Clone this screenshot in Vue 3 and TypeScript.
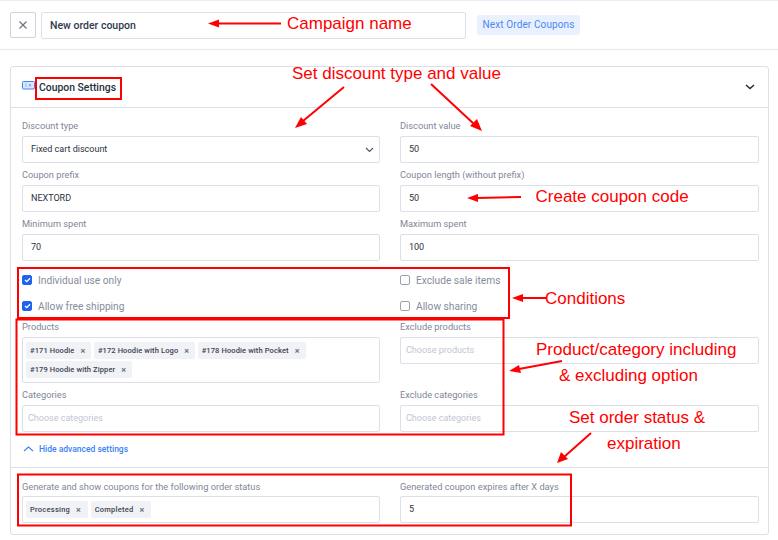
<script setup lang="ts">
interface Tag { text: string }
const productTags: Tag[] = [
  { text: '#171 Hoodie' },
  { text: '#172 Hoodie with Logo' },
  { text: '#178 Hoodie with Pocket' },
  { text: '#179 Hoodie with Zipper' },
]
const statusTags: Tag[] = [{ text: 'Processing' }, { text: 'Completed' }]
const lines: number[][] = [
  [281, 23.5, 218, 23.5],
  [344, 87, 303, 121],
  [431, 84, 474, 124],
  [521, 197, 477, 198],
  [546, 298, 522, 298],
  [562, 361, 519, 369],
  [591, 433, 564, 457],
]
const heads: string[] = [
  '208,23.5 219,19.5 219,27.5',
  '295,128 301,117 307,124',
  '482,131 470,126 477,119',
  '467,198 478,194 478,202',
  '512,298 523,294 523,302',
  '509,371 519,365 521,373',
  '557,463 561,452 568,459',
]
const boxes: number[][] = [
  [36, 78, 85, 21],
  [18, 268, 491, 50],
  [16.5, 319.5, 487, 115],
  [18, 474.5, 553, 51],
]
const notes = [
  { text: 'Campaign name', x: 287, y: 28.5 },
  { text: 'Set discount type and value', x: 292, y: 79 },
  { text: 'Create coupon code', x: 535.5, y: 202 },
  { text: 'Conditions', x: 545, y: 304 },
  { text: 'Product/category including', x: 536, y: 355 },
  { text: '& excluding option', x: 559, y: 381 },
  { text: 'Set order status &', x: 569, y: 423 },
  { text: 'expiration', x: 607, y: 449 },
]
</script>

<template>
  <div class="page">
    <header class="topbar">
      <button class="close" type="button" aria-label="Close">
        <svg width="10" height="10" viewBox="0 0 10 10"><path d="M1.5 1.5l7 7M8.5 1.5l-7 7" stroke="#6b7280" stroke-width="1.2" fill="none" /></svg>
      </button>
      <div class="name">New order coupon</div>
      <span class="badge">Next Order Coupons</span>
    </header>

    <section class="card">
      <div class="card-head">
        <svg class="ticket" width="13" height="9" viewBox="0 0 13 9">
          <rect x="0.5" y="0.5" width="12" height="7.5" rx="1" fill="#dbe7ff" stroke="#3b82f6" />
          <path d="M4 2.5v3.5" stroke="#3b82f6" stroke-dasharray="1 1" />
          <path d="M7 3l2 2.5M9 3L7 5.5" stroke="#7f8da8" stroke-width=".8" />
        </svg>
        <h2>Coupon Settings</h2>
        <svg class="toggle" width="10" height="6" viewBox="0 0 10 6"><path d="M1 1l4 3.6L9 1" stroke="#1f2937" stroke-width="1.4" fill="none" /></svg>
      </div>

      <div class="grid">
        <div class="field"><label>Discount type</label>
          <div class="control select">Fixed cart discount
            <svg width="9" height="6" viewBox="0 0 9 6"><path d="M1 1l3.5 3.5L8 1" stroke="#4b5563" stroke-width="1.1" fill="none" /></svg>
          </div>
        </div>
        <div class="field"><label>Discount value</label><div class="control">50</div></div>
        <div class="field"><label>Coupon prefix</label><div class="control">NEXTORD</div></div>
        <div class="field"><label>Coupon length (without prefix)</label><div class="control">50</div></div>
        <div class="field"><label>Minimum spent</label><div class="control">70</div></div>
        <div class="field"><label>Maximum spent</label><div class="control">100</div></div>
      </div>

      <div class="checks">
        <div class="check"><span class="box on"><svg width="7" height="6" viewBox="0 0 7 6"><path d="M1 3l1.8 1.6L6 1.2" stroke="#fff" stroke-width="1.3" fill="none" /></svg></span>Individual use only</div>
        <div class="check"><span class="box"></span>Exclude sale items</div>
        <div class="check"><span class="box on"><svg width="7" height="6" viewBox="0 0 7 6"><path d="M1 3l1.8 1.6L6 1.2" stroke="#fff" stroke-width="1.3" fill="none" /></svg></span>Allow free shipping</div>
        <div class="check"><span class="box"></span>Allow sharing</div>
      </div>

      <div class="grid">
        <div class="field"><label>Products</label>
          <div class="tags">
            <span v-for="t in productTags" :key="t.text" class="tag">{{ t.text }}<i>×</i></span>
          </div>
        </div>
        <div class="field"><label>Exclude products</label><div class="control ph">Choose products</div></div>
        <div class="field"><label>Categories</label><div class="control ph">Choose categories</div></div>
        <div class="field"><label>Exclude categories</label><div class="control ph">Choose categories</div></div>
      </div>

      <div class="advanced">
        <svg width="11" height="6" viewBox="0 0 11 6"><path d="M1 5l4.5-4L10 5" stroke="#3b82f6" stroke-width="1.1" fill="none" /></svg>
        Hide advanced settings
      </div>

      <div class="grid footer">
        <div class="field"><label>Generate and show coupons for the following order status</label>
          <div class="tags status">
            <span v-for="t in statusTags" :key="t.text" class="tag">{{ t.text }}<i>×</i></span>
          </div>
        </div>
        <div class="field"><label>Generated coupon expires after X days</label><div class="control">5</div></div>
      </div>
    </section>

    <svg class="notes" width="778" height="540" viewBox="0 0 778 540">
      <rect v-for="(b, i) in boxes" :key="'b' + i" :x="b[0]" :y="b[1]" :width="b[2]" :height="b[3]" fill="none" stroke="#f00" stroke-width="2" />
      <line v-for="(l, i) in lines" :key="'l' + i" :x1="l[0]" :y1="l[1]" :x2="l[2]" :y2="l[3]" stroke="#f00" stroke-width="2" />
      <polygon v-for="(h, i) in heads" :key="'h' + i" :points="h" fill="#f00" />
      <text v-for="n in notes" :key="n.text" :x="n.x" :y="n.y" class="note">{{ n.text }}</text>
    </svg>
  </div>
</template>

<style>
html, body { margin: 0; background: #fff; }
</style>

<style scoped>
.page {
  position: relative;
  width: 778px;
  height: 540px;
  overflow: hidden;
  box-sizing: border-box;
  border-top: 1px solid #eceef2;
  font-family: Roboto, "Liberation Sans", sans-serif;
  color: #2b3240;
}
.topbar {
  display: flex;
  align-items: center;
  height: 48px;
  padding: 0 10px;
  border-bottom: 1px solid #e6e8ee;
}
.close {
  width: 26px;
  height: 26px;
  padding: 0;
  display: flex;
  align-items: center;
  justify-content: center;
  background: #fff;
  border: 1px solid #cfd3de;
  border-radius: 2px;
}
.name {
  box-sizing: border-box;
  width: 425px;
  height: 27px;
  margin-left: 5px;
  padding-left: 8px;
  line-height: 26px;
  font-size: 10.5px;
  font-weight: 500;
  color: #2f3a4c;
  border: 1px solid #dcdfe8;
  border-radius: 2px;
}
.badge {
  box-sizing: border-box;
  width: 103px;
  margin-left: 11px;
  height: 20px;
  line-height: 20px;
  text-align: center;
  font-size: 10px;
  letter-spacing: .12px;
  color: #4d86f5;
  background: #eaf1fe;
  border-radius: 3px;
}
.card {
  box-sizing: border-box;
  width: 759px;
  height: 469px;
  margin: 16px 0 0 10px;
  border: 1px solid #dcdfe8;
  border-radius: 3px;
}
.card-head {
  display: flex;
  align-items: center;
  height: 40px;
  padding: 0 13px 0 11px;
  border-bottom: 1px solid #dcdfe8;
}
.ticket { margin-top: -3px; }
.card-head h2 {
  flex: 1;
  margin: 0 0 0 4px;
  font-size: 10.4px;
  font-weight: 500;
  color: #263040;
}
.grid {
  display: grid;
  grid-template-columns: 358px 359px;
  column-gap: 20px;
  row-gap: 5px;
  padding: 0 9px 0 11px;
}
.card-head + .grid { padding-top: 11px; }
.field label {
  display: block;
  height: 14px;
  margin-bottom: 3px;
  line-height: 14px;
  font-size: 9.25px;
  color: #7f8798;
}
.control {
  box-sizing: border-box;
  height: 27px;
  padding: 0 8px;
  line-height: 25px;
  font-size: 9px;
  color: #2b3240;
  border: 1px solid #dcdfe8;
  border-radius: 2px;
}
.select {
  display: flex;
  align-items: center;
  justify-content: space-between;
  padding-right: 5px;
}
.ph {
  padding-left: 5px;
  color: #c1c6d2;
}
.checks {
  display: grid;
  grid-template-columns: 358px 359px;
  column-gap: 20px;
  grid-auto-rows: 26px;
  padding: 6px 9px 1px 11px;
}
.check {
  display: flex;
  align-items: center;
  gap: 6px;
  font-size: 10.2px;
  color: #858c9d;
}
.box {
  box-sizing: border-box;
  display: flex;
  align-items: center;
  justify-content: center;
  width: 10px;
  height: 10px;
  margin-top: -1px;
  border: 1px solid #9aa1b2;
  border-radius: 2px;
}
.box.on {
  background: #1d63ed;
  border-color: #1d63ed;
}
.tags {
  box-sizing: border-box;
  display: flex;
  flex-wrap: wrap;
  align-content: flex-start;
  gap: 2px 2.5px;
  height: 46px;
  padding: 4px 3px;
  border: 1px solid #dcdfe8;
  border-radius: 2px;
}
.tags.status { height: 27px; }
.tag {
  display: flex;
  align-items: center;
  justify-content: space-between;
  height: 17px;
  padding: 0 6px 0 4px;
  font-size: 7.5px;
  font-weight: 500;
  letter-spacing: .12px;
  color: #3b4250;
  background: #f1f2f6;
  border-radius: 2px;
}
.tags.status .tag {
  padding-right: 7px;
  letter-spacing: .25px;
}
.tag i {
  margin-left: 6px;
  font-style: normal;
  font-size: 9px;
  font-weight: 700;
  color: #6f7686;
}
.advanced {
  display: flex;
  align-items: center;
  gap: 5px;
  height: 33px;
  padding: 0 0 2px 12px;
  font-size: 8.5px;
  font-weight: 500;
  color: #3b82f6;
}
.footer {
  padding-top: 12px;
  border-top: 1px solid #dcdfe8;
}
.footer label { margin-bottom: 2px; }
.notes {
  position: absolute;
  top: -1px;
  left: 0;
  pointer-events: none;
}
.note {
  font-family: "Liberation Sans", Arial, sans-serif;
  font-size: 17px;
  fill: #f00;
}
</style>
